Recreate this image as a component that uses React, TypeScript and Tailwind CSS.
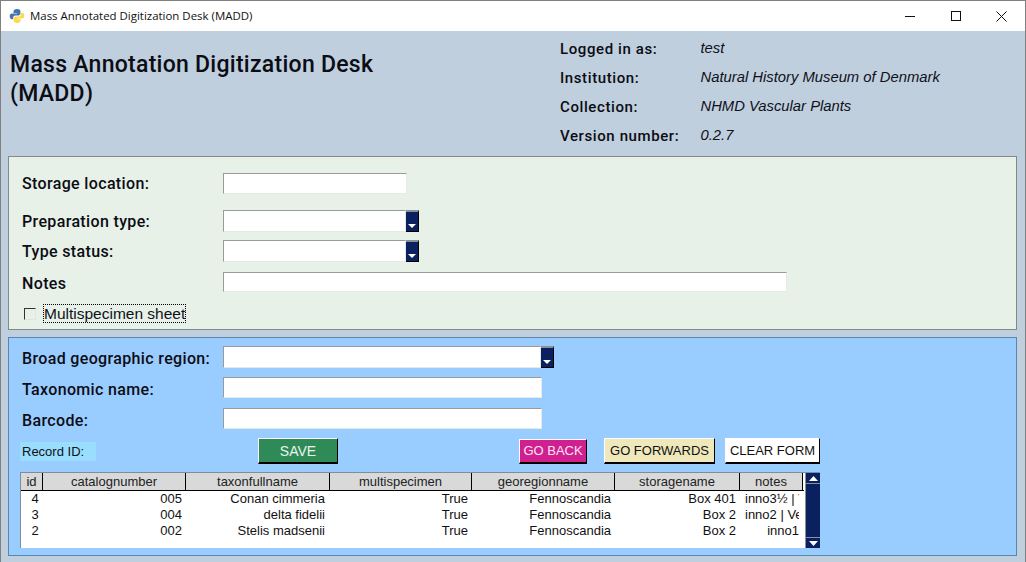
import React from "react";

const labelFont = "font-['Roboto',sans-serif] font-medium text-[16px] leading-[20px] tracking-[0.35px] text-[#0c0c14] pt-[2px]";
const arial = "font-['Liberation_Sans',sans-serif]";

function Field({ w, h = "h-[21px]" }: { w: string; h?: string }) {
  return <div className={`${w} ${h} bg-white border border-t-[#9a9a9a] border-l-[#9a9a9a] border-b-[#e4ebe6] border-r-[#e4ebe6]`} />;
}

function Combo({ w }: { w: string }) {
  return (
    <div className="flex">
      <Field w={w} h="h-[22px]" />
      <div className="w-[13px] h-[22px] bg-[#0a205f] border-t-2 border-t-[#8a8f9c] border-r border-b border-black flex items-end justify-center pb-[3px]">
        <svg width="8" height="4" viewBox="0 0 8 4"><path d="M0 0h8L4 4z" fill="#fff" /></svg>
      </div>
    </div>
  );
}

function Row({ label, children, className = "", nudge = "" }: { label: string; children: React.ReactNode; className?: string; nudge?: string }) {
  return (
    <div className={`flex items-center ${className}`}>
      <div className={`w-[201px] ${labelFont} ${nudge}`}>{label}</div>
      {children}
    </div>
  );
}

function RaisedButton({ children, className }: { children: React.ReactNode; className: string }) {
  return (
    <div className={`flex items-center justify-center pt-[1px] border-t border-l border-b-2 border-r border-t-white border-l-white border-b-black border-r-black ${arial} ${className}`}>
      {children}
    </div>
  );
}

const columns = [
  { name: "id", w: "w-[22px]" },
  { name: "catalognumber", w: "w-[143px]" },
  { name: "taxonfullname", w: "w-[144px]" },
  { name: "multispecimen", w: "w-[142px]" },
  { name: "georegionname", w: "w-[143px]" },
  { name: "storagename", w: "w-[125px]" },
  { name: "notes", w: "w-[63px]" },
];

const rows = [
  ["4", "005", "Conan cimmeria", "True", "Fennoscandia", "Box 401", "inno3½ | Ve"],
  ["3", "004", "delta fidelii", "True", "Fennoscandia", "Box 2", "inno2 | Ve"],
  ["2", "002", "Stelis madsenii", "True", "Fennoscandia", "Box 2", "inno1"],
];

function Info({ label, value }: { label: string; value: string }) {
  return (
    <div className="flex items-center h-[29px]">
      <div className="w-[140.500px] font-['Roboto',sans-serif] font-medium text-[15px] tracking-[0.6px] text-[#0c0c14]">{label}</div>
      <div className={`${arial} italic text-[14.8px] text-[#10101a] -translate-y-px`}>{value}</div>
    </div>
  );
}

export default function App() {
  return (
    <div className="w-[1026px] h-[562px] overflow-hidden bg-[#bfcfde] border-l border-t border-r border-[#808080] flex flex-col">
      <div className="h-[30px] shrink-0 bg-white flex items-center pl-[8px] pr-[1px]">
        <svg width="16" height="16" viewBox="0 0 16 16" className="mr-[5px]">
          <path d="M8 1C5.500 1 4.500 2 4.500 3.400V5H8v.6H3C1.500 5.600.7 6.800.7 8.300c0 1.600.8 2.900 2.200 2.900h1.300V9.500c0-1.200 1-2.100 2.200-2.100h3.100c1 0 1.900-.8 1.900-1.900V3.200C11.500 1.900 10 1 8 1z" fill="#3f78a8" />
          <path d="M8 15c2.500 0 3.500-1 3.500-2.400V11H8v-.6h5c1.500 0 2.300-1.200 2.300-2.700 0-1.600-.8-2.900-2.200-2.900h-1.300v1.700c0 1.200-1 2.100-2.200 2.100H6.500c-1 0-1.900.8-1.900 1.900v2.300C4.500 14.100 6 15 8 15z" fill="#fdd94f" />
        </svg>
        <span className="font-['Open_Sans',sans-serif] text-[11.45px] text-[#111]">Mass Annotated Digitization Desk (MADD)</span>
        <div className="ml-auto flex items-center h-full">
          <div className="w-[46px] flex justify-center"><svg width="10" height="10" viewBox="0 0 10 10"><path d="M0 5.500h10" stroke="#111" /></svg></div>
          <div className="w-[45px] flex justify-center"><svg width="10" height="10" viewBox="0 0 10 10"><rect x=".5" y=".5" width="9" height="9" fill="none" stroke="#111" /></svg></div>
          <div className="w-[46px] flex justify-center"><svg width="11" height="11" viewBox="0 0 11 11"><path d="M.5.500l10 10M10.500.500l-10 10" stroke="#111" /></svg></div>
        </div>
      </div>

      <div className="h-[125px] shrink-0 flex pl-[9px] pt-[4px]">
        <div className="w-[550px] pt-[15px] font-['Roboto',sans-serif] font-medium text-[23px] leading-[29px] tracking-[0.27px] text-[#0c0c14]">
          Mass Annotation Digitization Desk<br />(MADD)
        </div>
        <div className="flex flex-col">
          <Info label="Logged in as:" value="test" />
          <Info label="Institution:" value="Natural History Museum of Denmark" />
          <Info label="Collection:" value="NHMD Vascular Plants" />
          <Info label="Version number:" value="0.2.7" />
        </div>
      </div>

      <div className="ml-[7px] mr-[8px] h-[174px] shrink-0 bg-[#e7f1e8] border border-[#808a88] pl-[13px] flex flex-col">
        <Row label="Storage location:" className="mt-[15px]"><Field w="w-[184px]" /></Row>
        <Row label="Preparation type:" className="mt-[16px]"><Combo w="w-[183px]" /></Row>
        <Row label="Type status:" className="mt-[8px]"><Combo w="w-[183px]" /></Row>
        <Row label="Notes" className="mt-[9px]" nudge="translate-y-px"><Field w="w-[564px]" h="h-[20px]" /></Row>
        <div className="flex items-center mt-[11px] ml-[2px]">
          <div className="w-[12px] h-[12px] bg-[#e7f1e8] border-t border-l border-t-[#333] border-l-[#333] border-b border-r border-b-[#dfe6e0] border-r-[#dfe6e0]" />
          <div className={`ml-[7px] h-[19px] flex items-center border border-dotted border-black ${arial} text-[15.5px] text-[#10101a]`}>Multispecimen sheet</div>
        </div>
      </div>

      <div className="ml-[7px] mr-[8px] mt-[7px] h-[219px] shrink-0 bg-[#99ccff] border border-[#5d85a8] pl-[13px] flex flex-col">
        <Row label="Broad geographic region:" className="mt-[8px]" nudge="translate-y-px"><Combo w="w-[318px]" /></Row>
        <Row label="Taxonomic name:" className="mt-[8px]" nudge="translate-y-[2px]"><Field w="w-[319px]" /></Row>
        <Row label="Barcode:" className="mt-[9px]" nudge="translate-y-[2px]"><Field w="w-[319px]" /></Row>
        <div className="flex items-center mt-[9px] h-[26px]">
          <div className={`w-[76px] h-[19px] -ml-[2px] bg-[#99ddff] flex items-center pl-[2px] pt-[2px] ${arial} text-[13px] text-[#111]`}>Record ID:</div>
          <RaisedButton className="ml-[162px] w-[80px] h-[26px] bg-[#2e8b57] text-[#e9f3ec] text-[14px]">SAVE</RaisedButton>
          <RaisedButton className="ml-[181px] w-[68px] h-[25px] bg-[#d02090] text-[#fbe5f3] text-[13px]">GO BACK</RaisedButton>
          <RaisedButton className="ml-[17px] w-[111px] h-[26px] bg-[#eee8bb] text-[#111] text-[13px]">GO FORWARDS</RaisedButton>
          <RaisedButton className="ml-[10px] w-[95px] h-[26px] bg-white text-[#111] text-[13px]">CLEAR FORM</RaisedButton>
        </div>

        <div className="mt-[8px] -ml-[2px] w-[800px] h-[76px] bg-white flex border-t border-l border-t-[#7f8c99] border-l-[#7f8c99]">
          <div className="w-[783px] overflow-hidden">
            <div className={`flex h-[18px] border-b border-black ${arial} text-[13px] text-[#222]`}>
              {columns.map((c) => (
                <div key={c.name} className={`${c.w} shrink-0 h-[17px] pt-[1px] bg-[#d9d9d9] border-r border-black flex items-center justify-center`}>{c.name}</div>
              ))}
            </div>
            <div className={`${arial} text-[13px] leading-[16px] text-[#111]`}>
              {rows.map((r) => (
                <div key={r[0]} className="flex h-[16px]">
                  {r.map((v, i) => (
                    <div key={i} className={`${columns[i].w} shrink-0 overflow-hidden whitespace-nowrap ${i === 0 ? "text-center pl-[6px]" : i === 6 ? "pl-[5px] pr-[4px]" : i === 2 ? "text-right pr-[5px]" : "text-right pr-[4px]"}`}>
                      {i === 6 ? <div className={`overflow-hidden ${v === "inno1" ? "text-right" : ""}`}>{v}</div> : v}
                    </div>
                  ))}
                </div>
              ))}
            </div>
          </div>
          <div className="ml-[1px] w-[15px] h-[75px] bg-[#0a205f] border-l border-[#8a8f9c] flex flex-col justify-between">
            <div className="h-[11px] border-b border-[#8a8f9c] flex items-center justify-center"><svg width="9" height="5" viewBox="0 0 9 5"><path d="M4.500 0L9 5H0z" fill="#fff" /></svg></div>
            <div className="h-[11px] border-t border-[#8a8f9c] flex items-center justify-center"><svg width="9" height="5" viewBox="0 0 9 5"><path d="M0 0h9L4.500 5z" fill="#fff" /></svg></div>
          </div>
        </div>
      </div>
    </div>
  );
}
